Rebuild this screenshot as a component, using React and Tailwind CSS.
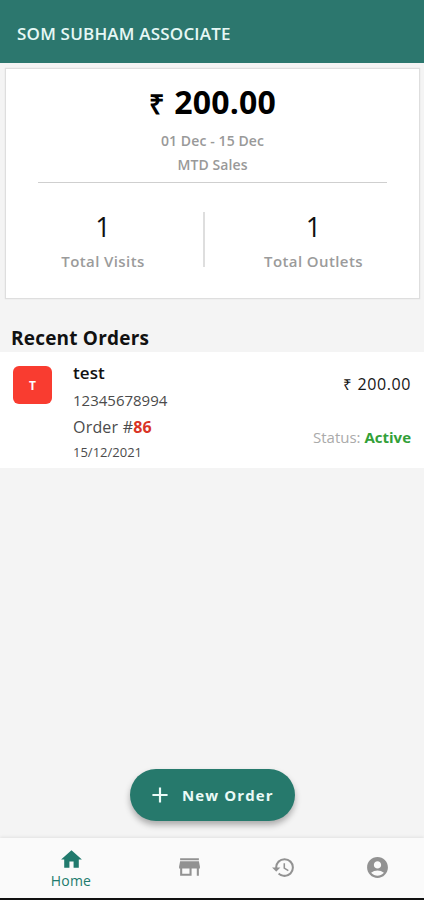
import React from 'react';
import { MdAccountCircle, MdAdd, MdHistory, MdHome } from 'react-icons/md';

const STATS = [
  { label: 'Total Visits', value: 1, className: 'w-[197px] pr-[3px]' },
  { label: 'Total Outlets', value: 1, className: 'flex-1 pl-[3px]' },
];

const ORDERS = [
  {
    id: 86,
    outlet: 'test',
    phone: '12345678994',
    date: '15/12/2021',
    amount: '200.00',
    status: 'Active',
  },
];

function StoreIcon({ size }) {
  return (
    <svg width={size} height={size} viewBox="0 0 24 24" fill="currentColor">
      <path d="M21 3H3v2h18V3zm1 10v-2l-1-5H3l-1 5v2h1v7h11v-7h5v7h2v-7h1zm-10 5H5v-5h7v5z" />
    </svg>
  );
}

const TABS = [
  { name: 'Home', Icon: MdHome, active: true },
  { name: 'Outlets', Icon: StoreIcon },
  { name: 'History', Icon: MdHistory },
  { name: 'Account', Icon: MdAccountCircle },
];

function Header() {
  return (
    <header className="flex h-[63px] shrink-0 items-center bg-[#2c776e] pl-[17px] pt-[5px]">
      <h1 className="text-[17px] font-semibold leading-6 tracking-[0.2px] text-[#e6f7f5]">
        SOM SUBHAM ASSOCIATE
      </h1>
    </header>
  );
}

function SalesCard() {
  return (
    <section className="ml-[5px] mr-[4px] mt-[5px] h-[231px] shrink-0 border border-[#dedede] bg-white text-center shadow-[0_0_1px_#d4d4d4]">
      <p className="mt-[13px] h-[42px] text-[32px] font-bold leading-[40px] tracking-[0.2px] text-black">
        <span className="mr-[10px] text-[27px] leading-none">₹</span>
        200.00
      </p>
      <p className="mt-[5px] text-[14px] font-semibold leading-6 tracking-[0.1px] text-[#999]">
        01 Dec - 15 Dec
      </p>
      <p className="text-[14px] font-semibold leading-6 tracking-[0.1px] text-[#999]">MTD Sales</p>
      <div className="ml-[32px] mr-[32px] mt-[5px] h-px bg-[#cfcfcf]" />

      <div className="mt-[29px] flex">
        {STATS.map((s, i) => (
          <React.Fragment key={s.label}>
            {i > 0 && <div className="h-[55px] w-[2px] bg-[#dedede]" />}
            <div className={s.className}>
              <p className="text-[27px] font-medium leading-[30px] text-[#111]">{s.value}</p>
              <p className="mt-[7px] text-[15px] font-semibold leading-6 tracking-[0.4px] text-[#9b9b9b]">
                {s.label}
              </p>
            </div>
          </React.Fragment>
        ))}
      </div>
    </section>
  );
}

function OrderRow({ order }) {
  return (
    <li className="flex h-[116px] bg-white pl-[13px] pr-[13px]">
      <div className="mt-[14px] flex h-[38px] w-[39px] items-center justify-center rounded-md bg-[#f93c30] pt-[2px] text-[12px] font-bold text-white">
        {order.outlet[0].toUpperCase()}
      </div>
      <div className="ml-[21px] flex-1 text-[#4b4b4b]">
        <p className="mt-[9px] text-[17px] font-semibold leading-6 tracking-[0.1px] text-[#111]">
          {order.outlet}
        </p>
        <p className="mt-[3px] text-[15px] leading-6">{order.phone}</p>
        <p className="mt-[3px] text-[16px] leading-6 tracking-[0.2px]">
          Order #<span className="font-bold text-[#d93426]">{order.id}</span>
        </p>
        <p className="mt-px text-[13px] leading-6">{order.date}</p>
      </div>
      <div className="text-right">
        <p className="mt-[20px] h-6 text-[16px] font-medium leading-6 tracking-[0.6px] text-[#161616]">
          <span className="mr-[5px] text-[15px] leading-none">₹</span>
          {order.amount}
        </p>
        <p className="mt-[29px] text-[15px] leading-6 text-[#aaa]">
          Status: <span className="font-bold text-[#32a038]">{order.status}</span>
        </p>
      </div>
    </li>
  );
}

function TabBar() {
  return (
    <nav className="flex h-[62px] shrink-0 border-b-2 border-[#111] bg-[#fafafa] shadow-[0_-1px_3px_rgba(0,0,0,0.08)]">
      {TABS.map(({ name, Icon, active }) =>
        active ? (
          <button
            key={name}
            type="button"
            className="flex w-[142px] flex-col items-center pt-[9px] text-[#217a6d]"
          >
            <Icon size={25} />
            <span className="-mt-px text-[14px] leading-5 tracking-[0.2px]">{name}</span>
          </button>
        ) : (
          <button
            key={name}
            type="button"
            aria-label={name}
            className="flex flex-1 items-center justify-center pb-[2px] text-[#929292]"
          >
            <Icon size={25} />
          </button>
        )
      )}
    </nav>
  );
}

export default function App() {
  return (
    <div className="flex h-screen w-full flex-col bg-[#f4f4f4] font-['Open_Sans',sans-serif]">
      <Header />
      <SalesCard />

      <h2 className="ml-[11px] mt-[26px] text-[19px] font-bold leading-[27px] tracking-[0.2px] text-[#111]">
        Recent Orders
      </h2>
      <ul>
        {ORDERS.map((order) => (
          <OrderRow key={order.id} order={order} />
        ))}
      </ul>

      <button
        type="button"
        className="ml-[130px] mb-[17px] mt-auto flex h-[52px] w-[165px] shrink-0 items-center rounded-full bg-[#26796c] pl-[17px] text-[#eafaf7] shadow-[0_4px_6px_rgba(0,0,0,0.3)]"
      >
        <MdAdd size={26} />
        <span className="ml-[9px] text-[15px] font-bold tracking-[1.1px]">New Order</span>
      </button>
      <TabBar />
    </div>
  );
}
